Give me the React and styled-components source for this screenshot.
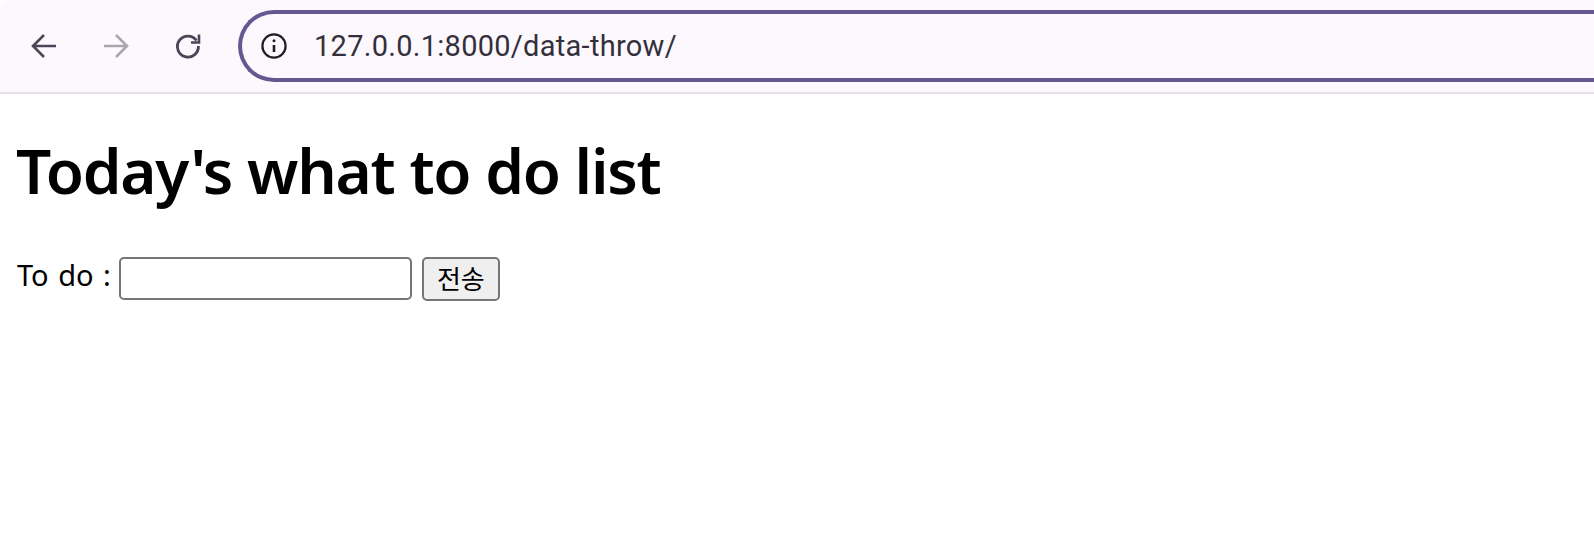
import React from 'react'
import styled, { createGlobalStyle } from 'styled-components'

const GlobalStyle = createGlobalStyle`
    html, body {
        margin: 0;
        padding: 0;
        background: #fff;
    }
`

const App = () => {
    return (
        <Page>
            <GlobalStyle />
            <Toolbar>
                <NavIcons>
                    <NavButton $color="#4b4557">
                        <svg width="30" height="30" viewBox="0 0 30 30" fill="none" stroke="currentColor" strokeWidth="2.6">
                            <path d="M27 15H4.5M15 4 4 15l11 11" />
                        </svg>
                    </NavButton>
                    <NavButton $color="#aaa6b0">
                        <svg width="30" height="30" viewBox="0 0 30 30" fill="none" stroke="currentColor" strokeWidth="2.6">
                            <path d="M3 15h22.5M15 4l11 11-11 11" />
                        </svg>
                    </NavButton>
                    <NavButton $color="#4b4557">
                        <svg width="30" height="30" viewBox="0 0 30 30" fill="none" stroke="currentColor" strokeWidth="2.8">
                            <path d="M23.5 9.5A10.5 10.5 0 1 0 25.4 15" />
                            <path d="M26 3.5V11.5H18" strokeWidth="2.6" />
                        </svg>
                    </NavButton>
                </NavIcons>
                <AddressBar>
                    <svg width="28" height="28" viewBox="0 0 28 28" fill="none" stroke="#1f1c26" strokeWidth="2.2">
                        <circle cx="14" cy="14" r="11.6" />
                        <path d="M14 13v7" strokeWidth="2.6" />
                        <circle cx="14" cy="8.8" r="1.5" fill="#1f1c26" stroke="none" />
                    </svg>
                    <Url>127.0.0.1:8000/data-throw/</Url>
                </AddressBar>
            </Toolbar>
            <Content>
                <Title>Today's what to do list</Title>
                <TodoForm>
                    <Label>To do :</Label>
                    <TextInput type="text" />
                    <SubmitButton type="button">전송</SubmitButton>
                </TodoForm>
            </Content>
        </Page>
    )
}

const Page = styled.div`
    min-height: 560px;
    overflow: hidden;
`

const Toolbar = styled.div`
    display: flex;
    align-items: center;
    height: 92px;
    padding-left: 20px;
    background: #fdf8fe;
    border-bottom: 2px solid #e4e0ea;
    border-top-left-radius: 10px;
`

const NavIcons = styled.div`
    display: flex;
    gap: 24px;
    margin-right: 26px;
`

const NavButton = styled.div`
    display: flex;
    align-items: center;
    justify-content: center;
    width: 48px;
    height: 48px;
    color: ${props => props.$color};
`

const AddressBar = styled.div`
    flex: 1;
    display: flex;
    align-items: center;
    gap: 26px;
    height: 72px;
    box-sizing: border-box;
    padding-left: 18px;
    border: 4px solid #655790;
    border-right: none;
    border-radius: 36px 0 0 36px;
`

const Url = styled.span`
    font-family: "Roboto", "Inter", sans-serif;
    font-size: 29px;
    letter-spacing: 0.28px;
    color: #33303b;
`

const Content = styled.div`
    padding: 0 16px;
`

const Title = styled.h1`
    margin: 40px 0 0;
    font-family: "Noto Sans", "Open Sans", sans-serif;
    font-size: 62px;
    line-height: 72px;
    font-weight: 600;
    letter-spacing: -1.25px;
    color: #000;
`

const TodoForm = styled.form`
    display: flex;
    align-items: center;
    margin-top: 49px;
`

const Label = styled.label`
    font-family: "Noto Sans", "Liberation Sans", sans-serif;
    font-size: 29px;
    word-spacing: 2px;
    color: #000;
    margin-right: 8px;
    padding-left: 1px;
    padding-bottom: 8px;
`

const TextInput = styled.input`
    width: 293px;
    height: 43px;
    box-sizing: border-box;
    margin: 0 10px 0 0;
    background: #fff;
    border: 2px solid #767676;
    border-radius: 5px;
`

const SubmitButton = styled.button`
    width: 78px;
    height: 44px;
    padding: 0 0 5px;
    font-family: "Noto Sans CJK KR", sans-serif;
    font-size: 26px;
    color: #000;
    background: #efefef;
    border: 2px solid #767676;
    border-radius: 5px;
`

export default App
